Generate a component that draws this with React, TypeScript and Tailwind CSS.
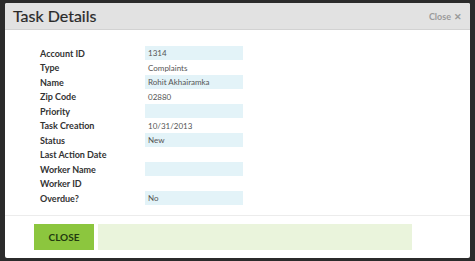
import React from 'react';

const ROWS: { label: string; value: string; shaded: boolean }[] = [
    { label: 'Account ID', value: '1314', shaded: true },
    { label: 'Type', value: 'Complaints', shaded: false },
    { label: 'Name', value: 'Rohit Akhairamka', shaded: true },
    { label: 'Zip Code', value: '02880', shaded: false },
    { label: 'Priority', value: '', shaded: true },
    { label: 'Task Creation', value: '10/31/2013', shaded: false },
    { label: 'Status', value: 'New', shaded: true },
    { label: 'Last Action Date', value: '', shaded: false },
    { label: 'Worker Name', value: '', shaded: true },
    { label: 'Worker ID', value: '', shaded: false },
    { label: 'Overdue?', value: 'No', shaded: true },
];

export default function App() {
    return (
        <div className="w-[475px] h-[261px] bg-[#2b2b2b] pt-[3px] pl-[5px] pr-[5px] pb-[3px] font-['Lato',sans-serif]">
            <div className="h-full bg-white rounded-[2px] flex flex-col overflow-hidden">
                {/* Header */}
                <div className="h-[27px] shrink-0 bg-[#e2e2e2] border-b border-[#d2d2d2] flex items-center justify-between pl-[8px] pr-[8px]">
                    <h1 className="text-[16px] leading-none text-[#2a2a2a] [-webkit-text-stroke:0.2px_#2a2a2a]">Task Details</h1>
                    <button type="button" className="text-[9px] font-bold text-[#9a9a9a] flex items-center gap-[3px] mt-[1px]">
                        Close <span className="text-[9px]">✕</span>
                    </button>
                </div>

                {/* Body */}
                <div className="flex-1 pt-[16px] pl-[35px]">
                    {ROWS.map(row => (
                        <div key={row.label} className="flex items-center h-[14.5px]">
                            <div className="w-[105px] text-[9px] font-bold text-[#333]">{row.label}</div>
                            <div className={`w-[98px] h-[14px] flex items-center pl-[3px] text-[8px] text-[#555] ${row.shaded ? 'bg-[#e3f3f8]' : ''}`}>
                                {row.value}
                            </div>
                        </div>
                    ))}
                </div>

                {/* Footer */}
                <div className="h-[43px] shrink-0 border-t border-[#ececec] flex items-start pt-[8px] pl-[29px] gap-[4px]">
                    <button type="button" className="w-[60px] h-[26px] bg-[#8cc63e] text-[#223a10] text-[10px] font-bold">
                        CLOSE
                    </button>
                    <div className="w-[314px] h-[26px] bg-[#eaf4dc]" />
                </div>
            </div>
        </div>
    );
}
